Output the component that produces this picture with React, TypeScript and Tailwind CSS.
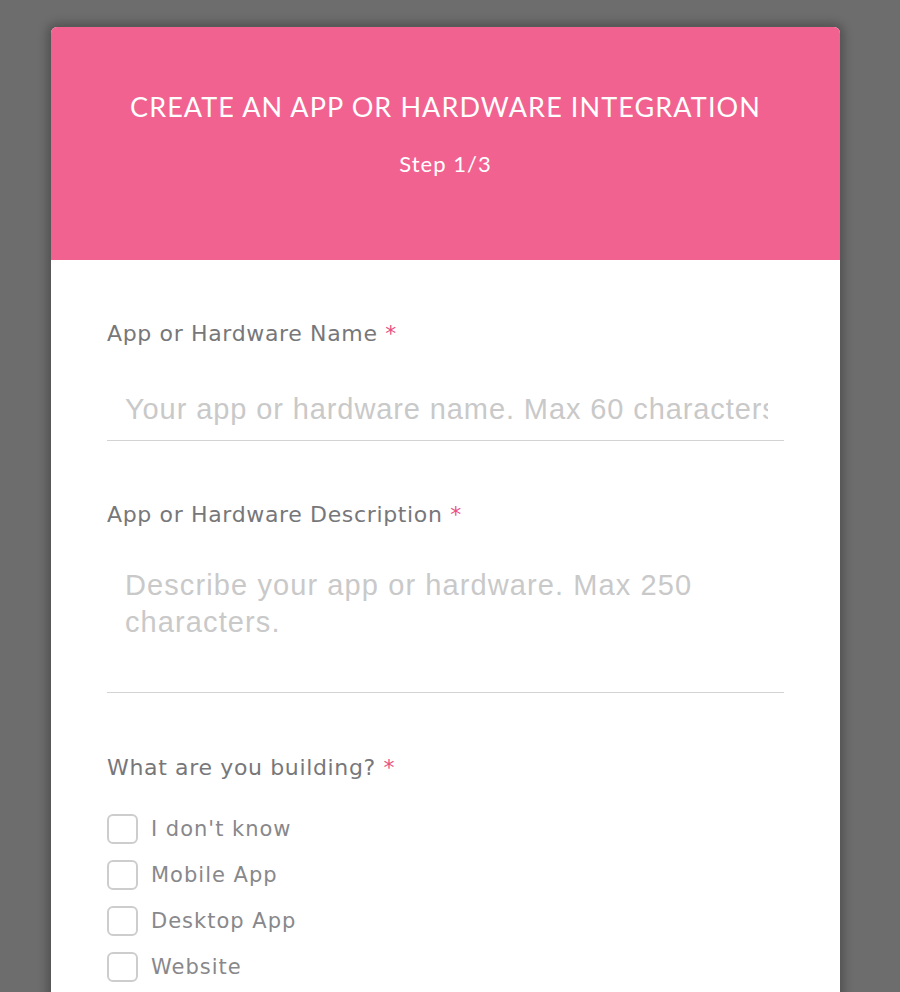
import React from 'react';

const options = ["I don't know", 'Mobile App', 'Desktop App', 'Website'];

const Label = ({ children }: { children: React.ReactNode }) => (
  <div className="h-[28px] font-['DejaVu_Sans',sans-serif] text-[22px] leading-[28px] tracking-[0.65px] text-[#77777a]">
    {children} <span className="text-[#e9507f]">*</span>
  </div>
);

export default function App() {
  return (
    <div className="min-h-screen bg-[#6d6d6d] pt-[27px] font-['Liberation_Sans',Arial,sans-serif]">
      <div className="ml-[51px] w-[789px] overflow-hidden rounded-t-[6px] bg-white shadow-[0_0_10px_4px_rgba(0,0,0,0.25)]">
        <div className="flex h-[233px] flex-col items-center bg-[#f26291] pt-[63px] text-white font-['Lato',sans-serif]">
          <h1 className="text-[27px] leading-[34px] tracking-[1.1px]">CREATE AN APP OR HARDWARE INTEGRATION</h1>
          <div className="mt-[26px] text-[22px] leading-[28px] tracking-[1px]">Step 1/3</div>
        </div>

        <form className="px-[56px] pb-[40px] pt-[60px]">
          <Label>App or Hardware Name</Label>
          <input
            className="mt-[30px] block h-[63px] w-full border-b border-[#d3d3d3] pl-[18px] pr-[16px] text-[29px] tracking-[0.9px] text-[#555] outline-none placeholder:text-[#c9c9c9]"
            placeholder="Your app or hardware name. Max 60 characters"
          />

          <div className="mt-[60px]">
            <Label>App or Hardware Description</Label>
          </div>
          <textarea
            className="mt-[20px] block h-[144px] w-full resize-none border-b border-[#d3d3d3] px-[18px] pt-[18px] text-[29px] leading-[37px] tracking-[1.1px] text-[#555] outline-none placeholder:text-[#c9c9c9]"
            placeholder="Describe your app or hardware. Max 250 characters."
          />

          <div className="mt-[61px]">
            <Label>What are you building?</Label>
          </div>
          <div className="mt-[32px] flex flex-col gap-[16px]">
            {options.map((o) => (
              <label key={o} className="flex h-[30px] items-center">
                <span className="h-[30px] w-[31px] shrink-0 rounded-[6px] border-2 border-[#cdcdcd]" />
                <span className="ml-[13px] font-['DejaVu_Sans',sans-serif] text-[21px] leading-[30px] tracking-[1px] text-[#88888b]">{o}</span>
              </label>
            ))}
          </div>
        </form>
      </div>
    </div>
  );
}
